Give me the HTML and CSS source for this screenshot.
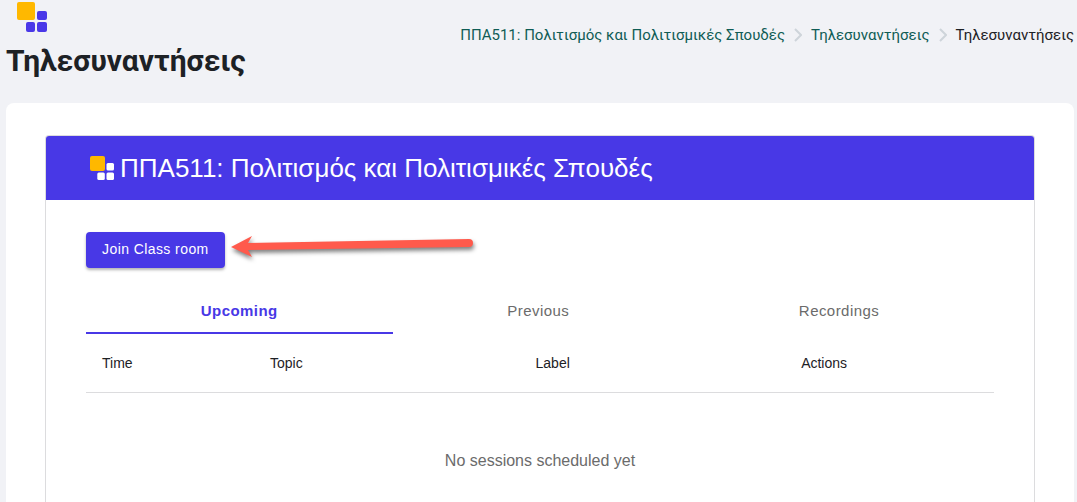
FILE: index.html
```html
<!DOCTYPE html>
<html lang="el">
<head>
  <meta charset="UTF-8">
  <meta name="viewport" content="width=device-width, initial-scale=1.0">
  <title>Τηλεσυναντήσεις</title>
  <link rel="stylesheet" href="styles.css">
</head>
<body>

  <header class="page-header">
    <div class="page-title">
      <svg class="page-logo" width="30" height="30" viewBox="0 0 30 30" aria-hidden="true">
        <rect x="0" y="0" width="18" height="18" rx="2" fill="#ffb800"/>
        <rect x="20" y="9" width="10" height="9" rx="2" fill="#4a38e8"/>
        <rect x="9" y="20" width="9" height="10" rx="2" fill="#4a38e8"/>
        <rect x="20" y="20" width="10" height="10" rx="2" fill="#4a38e8"/>
      </svg>
      <h1>Τηλεσυναντήσεις</h1>
    </div>
    <nav class="breadcrumb">
      <a href="#course">ΠΠΑ511: Πολιτισμός και Πολιτισμικές Σπουδές</a>
      <svg width="8" height="14" viewBox="0 0 8 14" aria-hidden="true"><path d="M1 1l6 6-6 6"/></svg>
      <a href="#meetings">Τηλεσυναντήσεις</a>
      <svg width="8" height="14" viewBox="0 0 8 14" aria-hidden="true"><path d="M1 1l6 6-6 6"/></svg>
      <span>Τηλεσυναντήσεις</span>
    </nav>
  </header>

  <main class="content">
    <section class="room">
      <div class="room-header">
        <svg width="25" height="25" viewBox="0 0 25 25" aria-hidden="true">
          <rect x="0" y="0" width="15" height="15" rx="2" fill="#ffb800"/>
          <rect x="16.5" y="7" width="7.5" height="7.5" rx="1.5" fill="#fff"/>
          <rect x="7.3" y="16.5" width="7.5" height="7.5" rx="1.5" fill="#fff"/>
          <rect x="16.5" y="16.5" width="7.5" height="7.5" rx="1.5" fill="#fff"/>
        </svg>
        <h2>ΠΠΑ511: Πολιτισμός και Πολιτισμικές Σπουδές</h2>
      </div>

      <div class="room-body">
        <div class="join">
          <button class="join-btn" type="button">Join Class room</button>
          <svg class="arrow" width="244" height="26" viewBox="0 0 244 26" aria-hidden="true">
            <path d="M0 12L21 1l-4 7L238 4a4 4 0 0 1 0 8L17 15l4 7z"/>
          </svg>
        </div>

        <div class="tabs" role="tablist">
          <button class="tab active" type="button" role="tab" aria-selected="true">Upcoming</button>
          <button class="tab" type="button" role="tab" aria-selected="false">Previous</button>
          <button class="tab" type="button" role="tab" aria-selected="false">Recordings</button>
        </div>

        <table class="sessions">
          <thead>
            <tr>
              <th class="col-time">Time</th>
              <th class="col-topic">Topic</th>
              <th class="col-label">Label</th>
              <th class="col-actions">Actions</th>
            </tr>
          </thead>
          <tbody>
            <tr>
              <td class="empty" colspan="4">No sessions scheduled yet</td>
            </tr>
          </tbody>
        </table>
      </div>
    </section>
  </main>

</body>
</html>
```
FILE: styles.css
```css
:root {
  --primary: #4838e6;
  --bg-color: #f1f2f6;
  --text-color: #1d2125;
  --muted: #6b6b6b;
  --border: #dcdcde;
  --link: #0f5c55;
}

* {
  margin: 0;
  padding: 0;
  box-sizing: border-box;
}

body {
  display: flex;
  flex-direction: column;
  min-height: 100vh;
  background: var(--bg-color);
  color: var(--text-color);
  font-family: Roboto, sans-serif;
}

.page-header {
  display: flex;
  justify-content: space-between;
  align-items: flex-start;
  padding: 2px 3px 24px 6px;
}

.page-logo {
  display: block;
  margin-left: 11px;
}

.page-header h1 {
  font-size: 30px;
  line-height: 36px;
  margin-top: 11px;
}

.breadcrumb {
  display: flex;
  align-items: center;
  gap: 9px;
  padding-top: 22px;
  font-size: 15px;
  line-height: 22px;
  white-space: nowrap;
}

.breadcrumb a {
  color: var(--link);
  text-decoration: none;
}

.breadcrumb svg {
  fill: none;
  stroke: #ced4da;
  stroke-width: 2;
}

.content {
  flex: 1;
  display: flex;
  flex-direction: column;
  margin: 0 3px 0 6px;
  padding: 32px 39px 0;
  background: #fff;
  border-radius: 8px 8px 0 0;
}

.room {
  flex: 1;
  border: 1px solid var(--border);
  border-bottom: none;
  border-radius: 4px 4px 0 0;
  overflow: hidden;
  font-family: "Liberation Sans", Arial, sans-serif;
}

.room-header {
  display: flex;
  align-items: center;
  gap: 5px;
  height: 64px;
  padding: 0 44px;
  background: var(--primary);
  color: #fff;
}

.room-header h2 {
  font-size: 26px;
  font-weight: 400;
  line-height: 32px;
}

.room-body {
  padding: 32px 40px 0;
}

.join {
  display: flex;
  align-items: flex-start;
  gap: 6px;
}

.join-btn {
  height: 36px;
  padding: 0 16px 2px;
  border: none;
  border-radius: 4px;
  background: var(--primary);
  color: #fff;
  font: 14px "Liberation Sans", Arial, sans-serif;
  letter-spacing: 0.03em;
  box-shadow: 0 2px 3px rgba(0, 0, 0, 0.3);
  cursor: pointer;
}

.arrow {
  margin-top: 3px;
  fill: #ff5a4c;
  overflow: visible;
  filter: drop-shadow(1px 3px 2px rgba(0, 0, 0, 0.5));
}

.tabs {
  display: flex;
  margin-top: 20px;
}

.tab {
  flex: 1 1 auto;
  height: 46px;
  border: none;
  border-bottom: 2px solid transparent;
  background: none;
  color: var(--muted);
  font: 15px "Liberation Sans", Arial, sans-serif;
  letter-spacing: 0.03em;
  cursor: pointer;
}

.tab.active {
  border-bottom-color: var(--primary);
  color: var(--primary);
  font-weight: 700;
}

.sessions {
  width: 100%;
  border-collapse: collapse;
  table-layout: fixed;
}

.sessions th {
  height: 58px;
  padding: 0 16px;
  border-bottom: 1px solid var(--border);
  font-size: 14px;
  font-weight: 400;
  text-align: left;
}

.col-time {
  width: 18.5%;
}

.col-topic,
.col-label {
  width: 29.25%;
}

.sessions .empty {
  padding: 56px 16px 32px;
  color: var(--muted);
  font-size: 16px;
  line-height: 24px;
  text-align: center;
}
```
